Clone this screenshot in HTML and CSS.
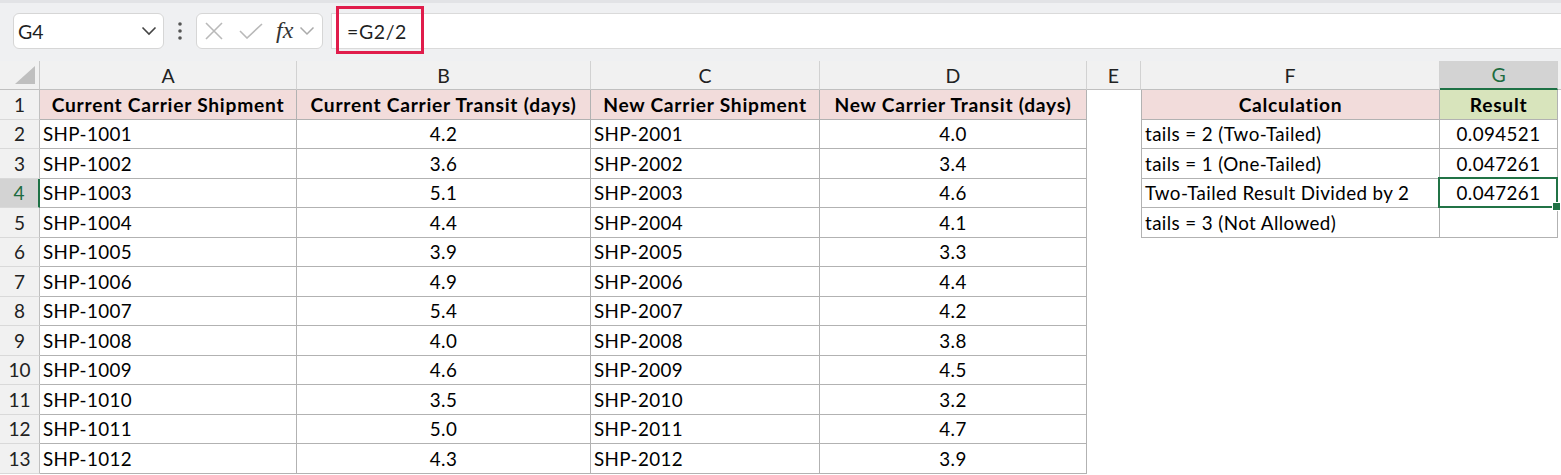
FILE: index.html
```html
<!DOCTYPE html>
<html>
<head>
<meta charset="utf-8">
<link rel="stylesheet" href="styles.css">
</head>
<body>
<div class="fbar">
  <div class="namebox"><span>G4</span>
    <svg width="16" height="10" viewBox="0 0 16 10"><polyline points="1.5,1.5 8,8 14.5,1.5" fill="none" stroke="#444" stroke-width="1.6"/></svg>
  </div>
  <div class="dots"><svg width="6" height="20" viewBox="0 0 6 20"><circle cx="3" cy="3" r="1.8" fill="#555"/><circle cx="3" cy="10" r="1.8" fill="#555"/><circle cx="3" cy="17" r="1.8" fill="#555"/></svg></div>
  <div class="fxbox">
    <svg class="ico-x" width="18" height="18" viewBox="0 0 18 18"><path d="M1 1 L17 17 M17 1 L1 17" stroke="#b9b9b9" stroke-width="1.6" fill="none"/></svg>
    <svg class="ico-ok" width="24" height="16" viewBox="0 0 24 16"><polyline points="1,8 8,15 23,1" stroke="#b9b9b9" stroke-width="1.6" fill="none"/></svg>
    <span class="fx">fx</span>
    <svg class="ico-dd" width="16" height="10" viewBox="0 0 16 10"><polyline points="1.5,1.5 8,8 14.5,1.5" fill="none" stroke="#aaa" stroke-width="1.5"/></svg>
  </div>
  <div class="finput"><span class="ftext">=G2/2</span><div class="redbox"></div></div>
</div>
<div class="sheet">
  <div class="corner"><svg width="20" height="18" viewBox="0 0 20 18"><polygon points="20,0 20,18 0,18" fill="#bfbfbf"/></svg></div>
  <div class="ch">A</div><div class="ch">B</div><div class="ch">C</div><div class="ch">D</div><div class="ch">E</div><div class="ch">F</div><div class="ch chsel">G</div><div class="ch chend"></div>

  <div class="rh">1</div>
  <div class="c t hp">Current Carrier Shipment</div><div class="c t hp">Current Carrier Transit (days)</div><div class="c t hp">New Carrier Shipment</div><div class="c t hp">New Carrier Transit (days)</div><div class="c"></div><div class="c t tl hp">Calculation</div><div class="c t hg">Result</div><div class="c"></div>

  <div class="rh">2</div>
  <div class="c t">SHP-1001</div><div class="c t n">4.2</div><div class="c t">SHP-2001</div><div class="c t n">4.0</div><div class="c"></div><div class="c t tl">tails = 2 (Two-Tailed)</div><div class="c t n">0.094521</div><div class="c"></div>

  <div class="rh">3</div>
  <div class="c t">SHP-1002</div><div class="c t n">3.6</div><div class="c t">SHP-2002</div><div class="c t n">3.4</div><div class="c"></div><div class="c t tl">tails = 1 (One-Tailed)</div><div class="c t n">0.047261</div><div class="c"></div>

  <div class="rh rhsel">4</div>
  <div class="c t">SHP-1003</div><div class="c t n">5.1</div><div class="c t">SHP-2003</div><div class="c t n">4.6</div><div class="c"></div><div class="c t tl">Two-Tailed Result Divided by 2</div><div class="c t n sel">0.047261</div><div class="c"></div>

  <div class="rh">5</div>
  <div class="c t">SHP-1004</div><div class="c t n">4.4</div><div class="c t">SHP-2004</div><div class="c t n">4.1</div><div class="c"></div><div class="c t tl">tails = 3 (Not Allowed)</div><div class="c t n"></div><div class="c"></div>

  <div class="rh">6</div>
  <div class="c t">SHP-1005</div><div class="c t n">3.9</div><div class="c t">SHP-2005</div><div class="c t n">3.3</div><div class="c"></div><div class="c"></div><div class="c"></div><div class="c"></div>

  <div class="rh">7</div>
  <div class="c t">SHP-1006</div><div class="c t n">4.9</div><div class="c t">SHP-2006</div><div class="c t n">4.4</div><div class="c"></div><div class="c"></div><div class="c"></div><div class="c"></div>

  <div class="rh">8</div>
  <div class="c t">SHP-1007</div><div class="c t n">5.4</div><div class="c t">SHP-2007</div><div class="c t n">4.2</div><div class="c"></div><div class="c"></div><div class="c"></div><div class="c"></div>

  <div class="rh">9</div>
  <div class="c t">SHP-1008</div><div class="c t n">4.0</div><div class="c t">SHP-2008</div><div class="c t n">3.8</div><div class="c"></div><div class="c"></div><div class="c"></div><div class="c"></div>

  <div class="rh">10</div>
  <div class="c t">SHP-1009</div><div class="c t n">4.6</div><div class="c t">SHP-2009</div><div class="c t n">4.5</div><div class="c"></div><div class="c"></div><div class="c"></div><div class="c"></div>

  <div class="rh">11</div>
  <div class="c t">SHP-1010</div><div class="c t n">3.5</div><div class="c t">SHP-2010</div><div class="c t n">3.2</div><div class="c"></div><div class="c"></div><div class="c"></div><div class="c"></div>

  <div class="rh">12</div>
  <div class="c t">SHP-1011</div><div class="c t n">5.0</div><div class="c t">SHP-2011</div><div class="c t n">4.7</div><div class="c"></div><div class="c"></div><div class="c"></div><div class="c"></div>

  <div class="rh">13</div>
  <div class="c t">SHP-1012</div><div class="c t n">4.3</div><div class="c t">SHP-2012</div><div class="c t n">3.9</div><div class="c"></div><div class="c"></div><div class="c"></div><div class="c"></div>
</div>
</body>
</html>
```
FILE: styles.css
```css
* { box-sizing: border-box; }
body {
  margin: 0;
  width: 1561px;
  height: 475px;
  overflow: hidden;
  background: #fff;
  font-family: Lato, "Liberation Sans", sans-serif;
  color: #000;
}
.fbar {
  height: 61px;
  background: #eff0f2;
  border-top: 3px solid #e2e3e6;
  display: flex;
  align-items: flex-start;
  padding: 10px 0 0 13px;
}
.namebox {
  width: 151px;
  height: 36px;
  background: #fff;
  border: 1px solid #d6d6d6;
  border-radius: 6px;
  display: flex;
  align-items: center;
  justify-content: space-between;
  padding: 0 6px 0 4px;
  font-size: 19.5px;
  color: #1f1f1f;
}
.dots {
  width: 32px;
  height: 36px;
  display: flex;
  align-items: center;
  justify-content: center;
}
.fxbox {
  width: 127px;
  height: 36px;
  background: #fff;
  border: 1px solid #d6d6d6;
  border-radius: 6px;
  display: flex;
  align-items: center;
  padding-left: 8px;
}
.ico-x { margin-right: 16px; }
.ico-ok { margin-right: 13px; }
.fx {
  font-family: "Liberation Serif", "DejaVu Serif", serif;
  font-style: italic;
  font-size: 24px;
  color: #333;
  margin-right: 6px;
  line-height: 1;
  margin-top: -2px;
}
.finput {
  position: relative;
  flex: 1;
  height: 36px;
  margin-left: 8px;
  background: #fff;
  border-top: 1px solid #dadada;
  border-bottom: 1px solid #dadada;
  border-left: 1px solid #dadada;
  display: flex;
  align-items: center;
  padding-left: 15px;
  font-size: 19.5px;
  letter-spacing: 0.6px;
  color: #1f1f1f;
}
.redbox {
  position: absolute;
  left: 4px;
  top: -8px;
  width: 88px;
  height: 48px;
  border: 3px solid #e01c4b;
}
.sheet {
  display: grid;
  grid-template-columns: 40px 257px 294px 229px 267px 54px 299px 118px 3px;
  grid-template-rows: 29px repeat(13, 29.5px);
  font-size: 18.8px;
}
.corner {
  background: #f1f1f1;
  border-right: 1px solid #c8c8c8;
  border-bottom: 1px solid #c0c0c0;
  display: flex;
  align-items: flex-end;
  justify-content: flex-end;
  padding: 0 4px 5px 0;
}
.ch {
  background: #f1f1f1;
  border-right: 1px solid #d2d2d2;
  border-bottom: 1px solid #c0c0c0;
  display: flex;
  align-items: center;
  justify-content: center;
  color: #222;
  font-size: 19.5px;
}
.chend { border-right: none; }
.chsel {
  background: #d3d3d3;
  color: #1d6b40;
  border-bottom: 2px solid #1e7145;
}
.rh {
  background: #f1f1f1;
  border-right: 1px solid #c0c0c0;
  border-bottom: 1px solid #d9d9d9;
  display: flex;
  align-items: center;
  justify-content: center;
  color: #222;
  font-size: 19px;
}
.rhsel {
  background: #d3d3d3;
  color: #1d6b40;
  border-right: 2px solid #1e7145;
}
.c {
  display: flex;
  align-items: center;
  padding-left: 3px;
  white-space: nowrap;
  background: #fff;
  letter-spacing: 0.4px;
}
.t {
  border-right: 1px solid #b2b2b2;
  border-bottom: 1px solid #b2b2b2;
}
.tl { border-left: 1px solid #b2b2b2; }
.n { justify-content: center; padding-left: 0; }
.hp {
  background: #f2dcdb;
  font-weight: 700;
  font-size: 19.2px;
  letter-spacing: 0.75px;
  justify-content: center;
  padding-left: 0;
}
.hg {
  background: #d8e4bc;
  font-weight: 700;
  font-size: 19.2px;
  letter-spacing: 0.75px;
  justify-content: center;
  padding-left: 0;
}
.sel {
  position: relative;
  z-index: 2;
}
.sel::after {
  content: "";
  position: absolute;
  left: -2px;
  top: -2px;
  right: -1px;
  bottom: -1px;
  border: 2px solid #217346;
}
.sel::before {
  content: "";
  position: absolute;
  right: -4px;
  bottom: -4px;
  width: 7px;
  height: 7px;
  background: #217346;
  border: 1px solid #fff;
  z-index: 3;
}
```
